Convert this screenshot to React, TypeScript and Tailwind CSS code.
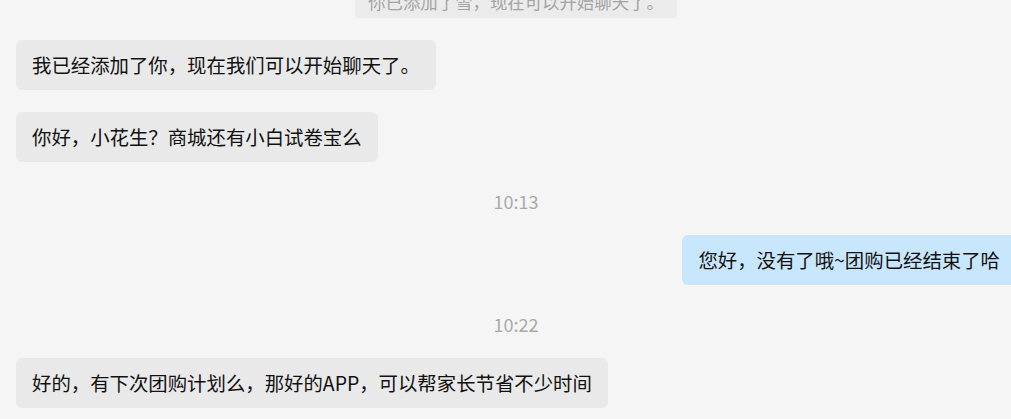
import React from "react";

type Msg =
  | { kind: "system"; text: string }
  | { kind: "time"; text: string }
  | { kind: "in" | "out"; text: string };

const MESSAGES: Msg[] = [
  { kind: "system", text: "你已添加了雪，现在可以开始聊天了。" },
  { kind: "in", text: "我已经添加了你，现在我们可以开始聊天了。" },
  { kind: "in", text: "你好，小花生？商城还有小白试卷宝么" },
  { kind: "time", text: "10:13" },
  { kind: "out", text: "您好，没有了哦~团购已经结束了哈" },
  { kind: "time", text: "10:22" },
  { kind: "in", text: "好的，有下次团购计划么，那好的APP，可以帮家长节省不少时间" },
];

const cjk = { fontFamily: '"Microsoft YaHei", "Noto Sans CJK SC", "Noto Sans", sans-serif' };

function Bubble({ text, out, gap }: { text: string; out: boolean; gap: string }) {
  return (
    <div className={`flex ${out ? "justify-end" : "justify-start"} ${gap}`}>
      <div
        className={`rounded-[6px] px-4 py-3 text-[19.4px] leading-[26px] text-[#111] ${
          out ? "bg-[#c9e7fc]" : "bg-[#e9e9e9]"
        }`}
      >
        {text}
      </div>
    </div>
  );
}

export default function App() {
  return (
    <div className="h-[419px] w-full overflow-hidden bg-[#f5f5f5]" style={cjk}>
      <div className="flex w-[1032px] flex-col px-4">
        {MESSAGES.map((m, i) => {
          if (m.kind === "system") {
            return (
              <div key={i} className={`self-center ${i === 0 ? "-mt-[14px]" : "mt-[22px]"}`}>
                <div className="rounded-[4px] bg-[#ebebeb] px-[13px] py-[6px] text-[17.4px] leading-[20px] text-[#a3a3a3]">
                  {m.text}
                </div>
              </div>
            );
          }
          if (m.kind === "time") {
            return (
              <div key={i} className="mt-[24px] h-[30px] text-center text-[18px] leading-[30px] text-[#a9a9a9]">
                {m.text}
              </div>
            );
          }
          const afterTime = i > 0 && MESSAGES[i - 1].kind === "time";
          return <Bubble key={i} text={m.text} out={m.kind === "out"} gap={afterTime ? "mt-[19px]" : "mt-[22px]"} />;
        })}
      </div>
    </div>
  );
}
